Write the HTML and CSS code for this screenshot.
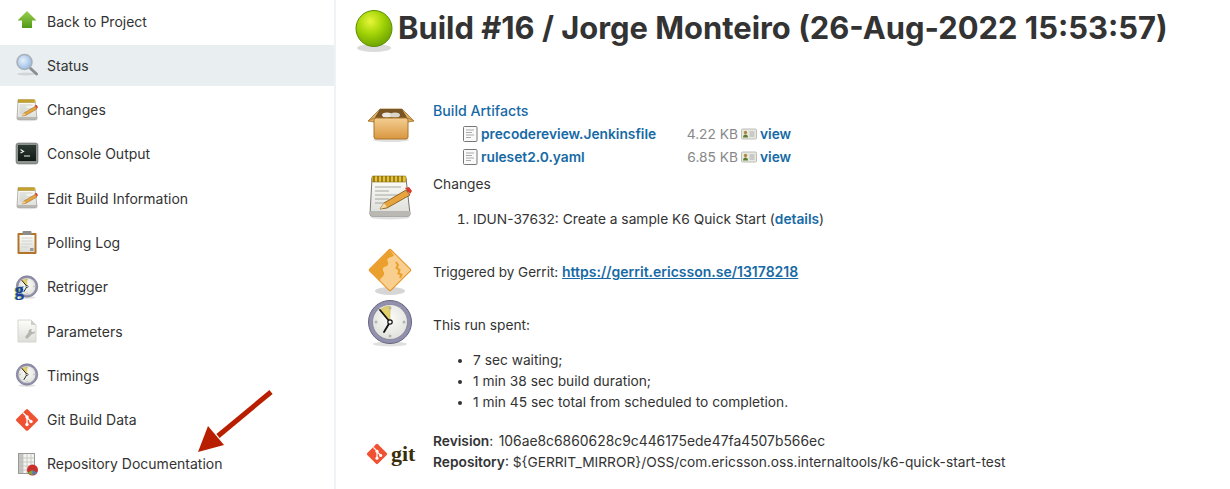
FILE: index.html
```html
<!DOCTYPE html>
<html lang="en">
<head>
  <meta charset="UTF-8">
  <meta name="viewport" content="width=device-width, initial-scale=1.0">
  <title>Build #16</title>
  <link rel="stylesheet" href="styles.css">
</head>
<body>
  <svg class="sprite" aria-hidden="true">
    <defs>
      <linearGradient id="greenArrow" x1="0" y1="0" x2="0" y2="1"><stop offset="0" stop-color="#9ad04e"/><stop offset="1" stop-color="#4f9a18"/></linearGradient>
      <linearGradient id="paper" x1="0" y1="0" x2="0" y2="1"><stop offset="0" stop-color="#fdfdfa"/><stop offset="1" stop-color="#dcdcd8"/></linearGradient>
      <linearGradient id="box" x1="0" y1="0" x2="0" y2="1"><stop offset="0" stop-color="#f3cf93"/><stop offset="1" stop-color="#d9963f"/></linearGradient>
      <linearGradient id="term" x1="0" y1="0" x2="0" y2="1"><stop offset="0" stop-color="#2c3a33"/><stop offset="1" stop-color="#121a15"/></linearGradient>
      <radialGradient id="ball" cx="0.4" cy="0.3" r="0.75"><stop offset="0" stop-color="#e8f53a"/><stop offset="0.45" stop-color="#a6d608"/><stop offset="0.95" stop-color="#6ea400"/></radialGradient>
      <radialGradient id="face" cx="0.5" cy="0.4" r="0.7"><stop offset="0" stop-color="#fbfbf8"/><stop offset="1" stop-color="#dcdcd7"/></radialGradient>
      <radialGradient id="lens" cx="0.4" cy="0.4" r="0.7"><stop offset="0" stop-color="#e6f0fb"/><stop offset="1" stop-color="#8db4e2"/></radialGradient>

      <symbol id="notepad" viewBox="0 0 48 48">
        <ellipse cx="24" cy="44" rx="20" ry="2.5" fill="#000" opacity=".12"/>
        <path d="M6 5h34l4 36a2 2 0 0 1-2 2H6a2 2 0 0 1-2-2z" fill="url(#paper)" stroke="#77756f"/>
        <path d="M4.500 38h39.700l.3 3a2 2 0 0 1-2 2H6a2 2 0 0 1-2-2z" fill="#b9b8b3"/>
        <rect x="6" y="3" width="34" height="6" rx="1" fill="#e6c33c" stroke="#8a6d10" stroke-width=".6"/>
        <path d="M8 3v6M12 3v6M16 3v6M20 3v6M24 3v6M28 3v6M32 3v6M36 3v6" stroke="#6e5608" stroke-width="1.200"/>
        <path d="M9 14h26M9 18h14M9 22h26M9 26h14M9 30h18" stroke="#a8a8a2" stroke-width="1"/>
        <path d="M14 36l4-6 22-13 4 5-23 13z" fill="#e6a33e" stroke="#7a5212" stroke-width=".8"/>
        <path d="M14 36l4-6 3 4z" fill="#f4d9a8"/>
        <path d="M39 15l5 6 2-3-3-4z" fill="#d83a2c"/>
      </symbol>
      <symbol id="clock" viewBox="0 0 48 48">
        <ellipse cx="24" cy="45" rx="17" ry="2.500" fill="#000" opacity=".12"/>
        <circle cx="24" cy="23" r="21.500" fill="#9291ad" stroke="#66647f"/>
        <circle cx="24" cy="23" r="17.500" fill="url(#face)" stroke="#6e6c88" stroke-width=".6"/>
        <path d="M24 23L14 11a16 16 0 0 1 10-4z" fill="#e3d06a" stroke="#c4ad4a" stroke-width=".5"/>
        <circle cx="24" cy="9" r="1.500" fill="#b5b5b0"/><circle cx="38" cy="23" r="1.500" fill="#b5b5b0"/><circle cx="24" cy="37" r="1.500" fill="#b5b5b0"/><circle cx="10" cy="23" r="1.500" fill="#b5b5b0"/>
        <path d="M24 23L14 11M24 23l-6 10" stroke="#111" stroke-width="1.800" stroke-linecap="round"/>
        <circle cx="24" cy="23" r="2.200" fill="#fff" stroke="#111" stroke-width="1.200"/>
      </symbol>
      <symbol id="diamond" viewBox="0 0 24 24">
        <rect x="3.800" y="3.800" width="16.400" height="16.400" rx="1.400" transform="rotate(45 12 12)" fill="#f05133"/>
        <path d="M8 4.700l4 4v7.500M12 9.500l4 4" fill="none" stroke="#fff" stroke-width="1.300"/>
        <circle cx="12" cy="9" r="1.700" fill="#fff"/><circle cx="12" cy="16.500" r="1.700" fill="#fff"/><circle cx="16" cy="13.500" r="1.700" fill="#fff"/>
      </symbol>
      <symbol id="textdoc" viewBox="0 0 16 16">
        <rect x=".5" y=".5" width="13.500" height="15" rx="1" fill="#fafafa" stroke="#777"/>
        <path d="M3 4h8M3 6.500h6M3 9h8M3 11.500h5" stroke="#aaa"/>
      </symbol>
      <symbol id="viewcard" viewBox="0 0 16 12">
        <rect x=".5" y="1" width="15" height="10" rx="1" fill="#e9e9e4" stroke="#bdbdb6"/>
        <circle cx="4.500" cy="4.500" r="1.700" fill="#b08a3c"/>
        <path d="M2 9.500c0-2 1-3 2.500-3s2.500 1 2.500 3z" fill="#5c7d2e"/>
        <path d="M8.500 4h5M8.500 6h5M8.500 8h5" stroke="#999" stroke-width=".8"/>
      </symbol>
    </defs>
  </svg>

  <nav class="sidebar">
    <a class="task">
      <svg class="task-icon" viewBox="0 0 24 24"><path d="M12 2l9.500 9.500H17V19H7v-7.500H2.500z" fill="url(#greenArrow)"/></svg>
      <span>Back to Project</span>
    </a>
    <a class="task task-active">
      <svg class="task-icon" viewBox="0 0 24 24">
        <ellipse cx="11" cy="21" rx="9" ry="1.500" fill="#000" opacity=".1"/>
        <path d="M14.500 14.500l7 6.500" stroke="#8b8f94" stroke-width="3" stroke-linecap="round"/>
        <circle cx="9.500" cy="9" r="7.500" fill="url(#lens)" stroke="#a9b0b8" stroke-width="1.600"/>
      </svg>
      <span>Status</span>
    </a>
    <a class="task"><svg class="task-icon"><use href="#notepad"/></svg><span>Changes</span></a>
    <a class="task">
      <svg class="task-icon" viewBox="0 0 24 24">
        <rect x="1" y="1" width="22" height="21" rx="2.500" fill="#8f9490" stroke="#6a6d6a" stroke-width=".6"/>
        <rect x="3" y="3" width="18" height="16" fill="url(#term)"/>
        <path d="M5.500 7.500L8.500 9.500 5.500 11M9 14h6" fill="none" stroke="#e8efe8" stroke-width="1.200"/>
      </svg>
      <span>Console Output</span>
    </a>
    <a class="task"><svg class="task-icon"><use href="#notepad"/></svg><span>Edit Build Information</span></a>
    <a class="task">
      <svg class="task-icon" viewBox="0 0 24 24">
        <rect x="2.500" y="3" width="19" height="21" rx="1" fill="#b0752a"/>
        <rect x="4.500" y="5" width="15" height="17" fill="url(#paper)"/>
        <rect x="7.500" y="1" width="9" height="4" rx="1" fill="#8c8c88"/>
        <path d="M6.500 8h11M6.500 11h11M6.500 14h11M6.500 17h7" stroke="#d2d2ce"/>
        <rect x="15" y="18" width="3.500" height="3" fill="#999"/>
      </svg>
      <span>Polling Log</span>
    </a>
    <a class="task">
      <svg class="task-icon"><use href="#clock"/></svg>
      <span class="retrigger-g" aria-hidden="true">g</span>
      <span>Retrigger</span>
    </a>
    <a class="task">
      <svg class="task-icon" viewBox="0 0 24 24">
        <path d="M3 1h13l5 5v17H3z" fill="url(#paper)" stroke="#d5d5d0"/>
        <path d="M16 1v5h5z" fill="#cfcfca"/>
        <path d="M12 20l5-5c2 .5 3-1 3-3l-2 1.500-2-1.500 1-2c-2-.5-4 1-3.500 3.500L10 18z" fill="#b5b5b0"/>
      </svg>
      <span>Parameters</span>
    </a>
    <a class="task"><svg class="task-icon"><use href="#clock"/></svg><span>Timings</span></a>
    <a class="task"><svg class="task-icon"><use href="#diamond"/></svg><span>Git Build Data</span></a>
    <a class="task">
      <svg class="task-icon" viewBox="0 0 24 24">
        <rect x="3.500" y="1.500" width="16" height="20" fill="#f2f2ee" stroke="#9a9a96"/>
        <rect x="4" y="2" width="4" height="19" fill="#c4c4c0"/>
        <path d="M4 6h15M4 10h15M4 14h15M4 18h15M8 2v19M12 2v19M16 2v19" stroke="#bcbcb8" stroke-width=".7"/>
        <circle cx="17.500" cy="18" r="5.500" fill="#c9302c"/>
        <path d="M17.500 18v5a5.500 5.500 0 0 0 4.500-2.500z" fill="#4d7fc4"/>
        <path d="M17.500 18v5a5.500 5.500 0 0 1-4.500-2.500z" fill="#7aa83a"/>
      </svg>
      <span>Repository Documentation</span>
    </a>
  </nav>

  <main class="content">
    <h1 class="title">
      <svg class="title-ball" viewBox="0 0 48 48">
        <ellipse cx="24" cy="42" rx="17" ry="4" fill="#000" opacity=".14"/>
        <circle cx="24" cy="22.500" r="18" fill="url(#ball)" stroke="#5c8f00"/>
      </svg>
      <span class="title-text">Build #16 / Jorge Monteiro (26-Aug-2022 15:53:57)</span>
    </h1>

    <section class="row row-artifacts">
      <svg class="row-icon" viewBox="0 0 48 48">
        <ellipse cx="25" cy="40" rx="18" ry="2" fill="#000" opacity=".12"/>
        <path d="M2 21l8-8 4-4h22l4 4 8 8-6 1H8z" fill="#e0b066" stroke="#a8742a" stroke-width=".8"/>
        <path d="M14 9h22l6 10H8z" fill="#7a5626"/>
        <ellipse cx="21" cy="15" rx="5" ry="2.500" fill="#ece8df"/><ellipse cx="29" cy="15" rx="5" ry="2.500" fill="#dad5ca"/>
        <rect x="8" y="18" width="34" height="21" rx="2" fill="url(#box)" stroke="#a8742a"/>
        <path d="M2 21l6-3M48 21l-6-3" fill="none" stroke="#a8742a" stroke-width=".8"/>
      </svg>
      <div class="row-body">
        <a class="link artifacts-head">Build Artifacts</a>
        <div class="file-grid">
          <svg class="file-icon"><use href="#textdoc"/></svg>
          <a class="link file-name">precodereview.Jenkinsfile</a>
          <span class="file-size">4.22 KB</span>
          <svg class="view-icon"><use href="#viewcard"/></svg>
          <a class="link file-name">view</a>
          <svg class="file-icon"><use href="#textdoc"/></svg>
          <a class="link file-name">ruleset2.0.yaml</a>
          <span class="file-size">6.85 KB</span>
          <svg class="view-icon"><use href="#viewcard"/></svg>
          <a class="link file-name">view</a>
        </div>
      </div>
    </section>

    <section class="row row-changes">
      <svg class="row-icon"><use href="#notepad"/></svg>
      <div class="row-body">
        <p class="line">Changes</p>
        <ol class="list">
          <li>IDUN-37632: Create a sample K6 Quick Start (<a class="link file-name">details</a>)</li>
        </ol>
      </div>
    </section>

    <section class="row row-gerrit">
      <svg class="row-icon" viewBox="0 0 48 48">
        <ellipse cx="24" cy="43" rx="15" ry="4" fill="#000" opacity=".16"/>
        <rect x="9" y="7" width="30" height="30" rx="1.500" transform="rotate(45 24 22)" fill="#f8cf8e" stroke="#e58f1c"/>
        <path d="M24 1.500L3.500 22 14 32.500c1-4 3-3 4-6s-2-3-1-6 4-1 5-4-2-4 0-6 4-1 6-3z" fill="#eb9f2c"/>
        <path d="M30 14l2 3-1.500 3 3 2-1 3.500 3 1-1.500 3.500" fill="none" stroke="#eb9f2c" stroke-width="2"/>
      </svg>
      <p class="line">Triggered by Gerrit: <a class="link underlined">https://gerrit.ericsson.se/13178218</a></p>
    </section>

    <section class="row row-time">
      <svg class="row-icon"><use href="#clock"/></svg>
      <div class="row-body">
        <p class="line">This run spent:</p>
        <ul class="list list-time">
          <li>7 sec waiting;</li>
          <li>1 min 38 sec build duration;</li>
          <li>1 min 45 sec total from scheduled to completion.</li>
        </ul>
      </div>
    </section>

    <section class="row row-git">
      <div class="git-logo">
        <svg class="git-diamond"><use href="#diamond"/></svg>
        <span class="git-word">git</span>
      </div>
      <div class="row-body">
        <p class="line git-line"><b class="label">Revision</b>: <span class="hash">106ae8c6860628c9c446175ede47fa4507b566ec</span></p>
        <p class="line git-line"><b class="label">Repository</b>: ${GERRIT_MIRROR}/OSS/com.ericsson.oss.internaltools/k6-quick-start-test</p>
      </div>
    </section>
  </main>

  <svg class="callout" viewBox="0 0 80 70">
    <path d="M74 2L21 46" stroke="#b81f00" stroke-width="5"/>
    <path d="M1 62L11 36 27 55z" fill="#b81f00"/>
  </svg>
</body>
</html>
```

FILE: styles.css
```css
html, body {
  height: 100%;
}
body {
  margin: 0;
  display: flex;
  overflow: hidden;
  font-family: Inter, "Noto Sans", sans-serif;
  font-size: 14px;
  color: #333;
  background-color: #fff;
}
.sprite {
  position: absolute;
  width: 0;
  height: 0;
}

/* sidebar */
.sidebar {
  width: 334px;
  flex: none;
  padding-top: 0.5px;
  border-right: 2px solid #eff3f5;
}
.task {
  position: relative;
  display: flex;
  align-items: center;
  gap: 8px;
  height: 41px;
  margin-bottom: 3.31px;
  padding-left: 15px;
}
.task-active {
  background-color: #e9eef1;
}
.task-icon {
  width: 24px;
  height: 24px;
  flex: none;
}
.retrigger-g {
  position: absolute;
  left: 15px;
  top: 16px;
  font-family: "Liberation Serif", serif;
  font-weight: bold;
  font-size: 18px;
  line-height: 16px;
  color: #1c3f9e;
  text-shadow: -1px 0 #5aa84a;
}

/* main column */
.content {
  flex: 1;
  padding-left: 20px;
  font-size: 13.75px;
}
.title {
  display: flex;
  align-items: center;
  height: 48px;
  margin: 6px 0 0;
  font-size: 30.9px;
  font-weight: 700;
  line-height: 44px;
  white-space: nowrap;
}
.title-ball {
  width: 48px;
  height: 48px;
  flex: none;
  margin-left: -6px;
}
.title-text {
  margin-bottom: 4px;
}
.row {
  display: flex;
  padding-left: 10px;
}
.row-icon {
  width: 48px;
  height: 48px;
  flex: none;
  margin-right: 19px;
}
.row-artifacts {
  margin-top: 46px;
}
.row-changes {
  margin-top: 5px;
}
.row-gerrit {
  align-items: center;
  margin-top: 19px;
}
.row-gerrit .line {
  font-size: 13.5px;
}
.row-time {
  margin-top: 3px;
}
.row-time .row-body {
  padding-top: 16px;
}
.row-git {
  margin-top: 16.5px;
}
.row-body {
  padding-top: 1px;
}
.line {
  margin: 0;
  line-height: 20px;
}
.link {
  color: #176aa5;
}
.artifacts-head {
  display: block;
  font-size: 14.2px;
  font-weight: 500;
  line-height: 20px;
}
.file-grid {
  display: grid;
  grid-template-columns: 18px 180px 77px 22px auto;
  align-items: center;
  grid-auto-rows: 23px;
  margin: 1px 0 0 30px;
}
.file-icon {
  width: 16px;
  height: 16px;
}
.file-name {
  font-weight: 600;
}
.file-size {
  text-align: right;
  color: #888;
}
.view-icon {
  width: 16px;
  height: 12px;
  margin-left: 3px;
}
.list {
  margin: 15px 0 0;
  padding-left: 40px;
  line-height: 20px;
}
.list-time li {
  margin-bottom: 1px;
}
.underlined {
  font-size: 14px;
  font-weight: 600;
  text-decoration: underline;
}
.label {
  font-weight: 600;
}
.hash {
  margin-left: 1.5px;
  font-size: 13.88px;
}
.git-line {
  line-height: 21px;
}
.git-logo {
  display: flex;
  align-items: center;
  width: 67px;
  height: 49px;
  flex: none;
}
.git-diamond {
  width: 22px;
  height: 22px;
  flex: none;
}
.git-word {
  margin-left: 3px;
  font-family: "Liberation Serif", serif;
  font-size: 22px;
  font-weight: 700;
  color: #3b2e0a;
}

/* annotation arrow drawn over the page */
.callout {
  position: absolute;
  left: 197px;
  top: 390px;
  width: 80px;
  height: 70px;
}
```
